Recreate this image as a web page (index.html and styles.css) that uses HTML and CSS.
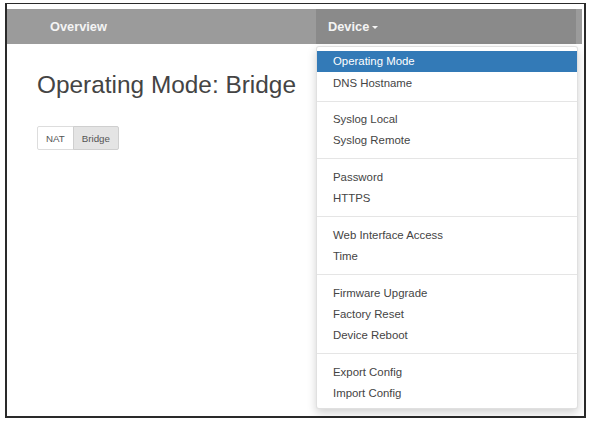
FILE: index.html
```html
<!DOCTYPE html>
<html>
<head>
<meta charset="utf-8">
<link rel="stylesheet" href="styles.css">
</head>
<body>
<div class="frame">
  <nav class="navbar">
    <a class="nav-link overview">Overview</a>
    <div class="nav-item device">
      <a class="nav-link">Device<span class="caret"></span></a>
      <ul class="dropdown">
        <li class="active">Operating Mode</li>
        <li>DNS Hostname</li>
        <li class="divider"></li>
        <li>Syslog Local</li>
        <li>Syslog Remote</li>
        <li class="divider"></li>
        <li>Password</li>
        <li>HTTPS</li>
        <li class="divider"></li>
        <li>Web Interface Access</li>
        <li>Time</li>
        <li class="divider"></li>
        <li>Firmware Upgrade</li>
        <li>Factory Reset</li>
        <li>Device Reboot</li>
        <li class="divider"></li>
        <li>Export Config</li>
        <li>Import Config</li>
      </ul>
    </div>
  </nav>
  <main class="content">
    <h2 class="title">Operating Mode: Bridge</h2>
    <div class="btn-group">
      <button class="btn">NAT</button>
      <button class="btn active">Bridge</button>
    </div>
  </main>
</div>
</body>
</html>
```
FILE: styles.css
```css
html, body {
  margin: 0;
  padding: 0;
  background: #fff;
  font-family: "Liberation Sans", Arial, sans-serif;
}
.frame {
  margin: 3px 3px 0 5px;
  height: 415px;
  box-sizing: border-box;
  border-top: 1px solid #2a2a2a;
  border-left: 2px solid #2a2a2a;
  border-right: 2px solid #2a2a2a;
  border-bottom: 2px solid #2a2a2a;
  padding-top: 5px;
}
.navbar {
  display: flex;
  height: 35px;
  background: #9b9b9b;
  margin-right: 2px;
}
.nav-link {
  display: flex;
  align-items: center;
  height: 35px;
  color: #f4f4f4;
  font-weight: bold;
  font-size: 12.8px;
  text-decoration: none;
}
.overview {
  padding-left: 43px;
  width: 266px;
}
.device {
  position: relative;
  margin-left: auto;
  margin-right: 6px;
  width: 260px;
  background: #8a8a8a;
}
.device .nav-link {
  padding-left: 12px;
}
.caret {
  display: inline-block;
  width: 0;
  height: 0;
  margin-left: 3px;
  margin-top: 2px;
  border-top: 3px solid #f4f4f4;
  border-left: 3px solid transparent;
  border-right: 3px solid transparent;
}
.dropdown {
  position: absolute;
  top: 37px;
  left: 0;
  width: 262px;
  box-sizing: border-box;
  margin: 0;
  padding: 4px 0;
  list-style: none;
  background: #fff;
  border: 1px solid rgba(0,0,0,0.12);
  border-radius: 3px;
  box-shadow: 0 4px 10px rgba(0,0,0,0.18);
  z-index: 10;
}
.dropdown li {
  padding: 2.45px 16px;
  line-height: 16.25px;
  font-size: 11.4px;
  color: #444;
  white-space: nowrap;
}
.dropdown li.active {
  background: #337ab7;
  color: #fff;
}
.dropdown li.divider {
  padding: 0;
  height: 1px;
  margin: 7.3px 0;
  background: #e5e5e5;
}
.content {
  padding: 28px 0 0 30px;
}
.title {
  margin: 0;
  font-size: 24.4px;
  line-height: 26.8px;
  font-weight: normal;
  color: #444;
}
.btn-group {
  display: flex;
  margin-top: 27px;
}
.btn {
  font-family: "Liberation Sans", Arial, sans-serif;
  font-size: 9.75px;
  line-height: 13px;
  padding: 5px 8px;
  height: 24px;
  box-sizing: border-box;
  color: #555;
  background: #fff;
  border: 1px solid #ddd;
  margin: 0;
}
.btn:first-child {
  border-radius: 2px 0 0 2px;
}
.btn + .btn {
  margin-left: -1px;
  border-radius: 0 2px 2px 0;
}
.btn.active {
  background: #e4e4e4;
  border-color: #cfcfcf;
}
```
